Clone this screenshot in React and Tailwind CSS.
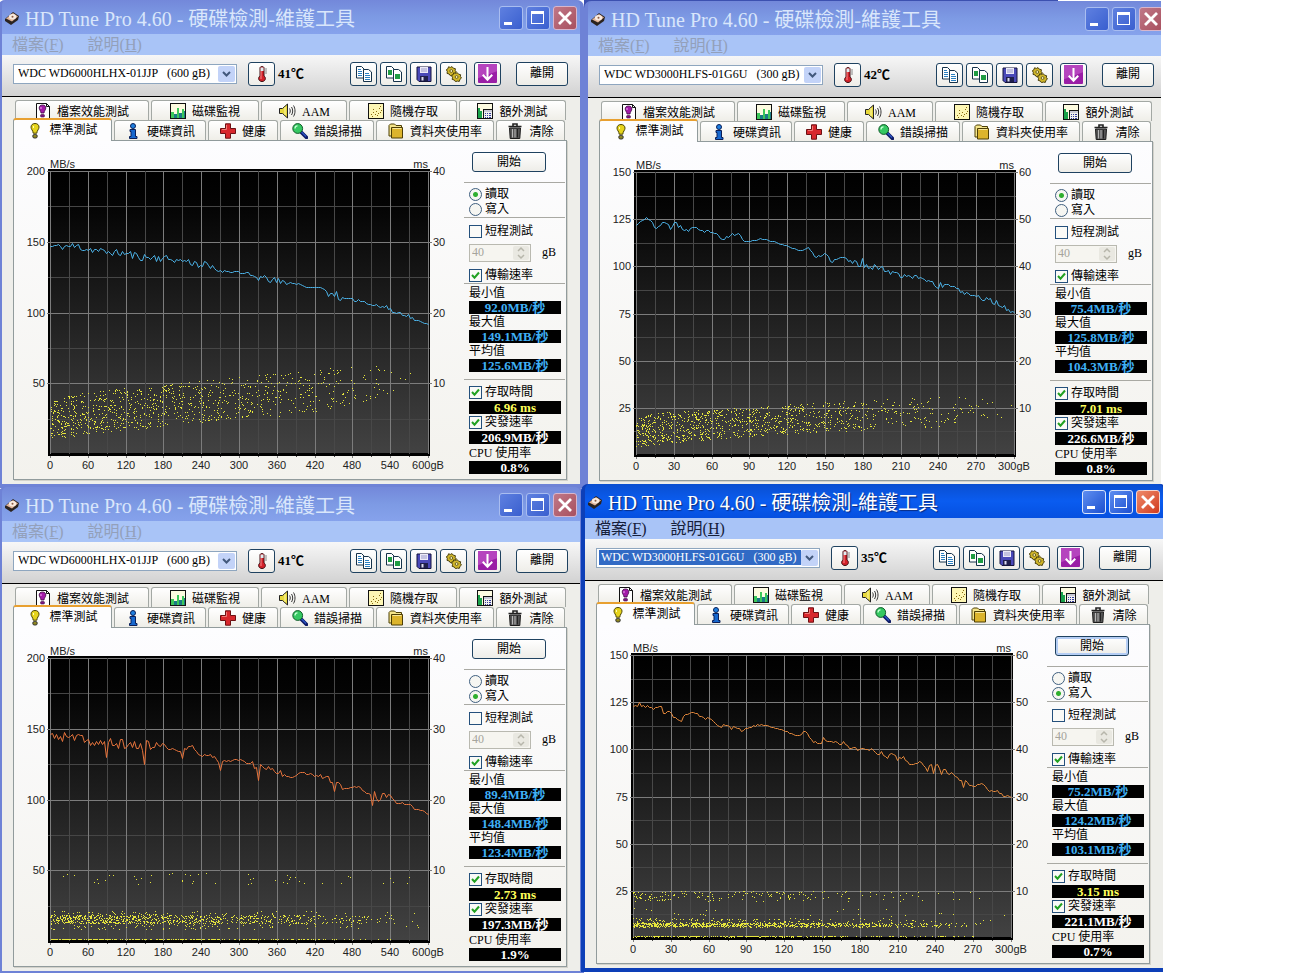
import React from 'react';

/* ---------- toolbar and tab icons, drawn on a 16 x 16 grid ---------- */

const Svg = ({ children, className = 'size-4 shrink-0' }) => (
  <svg viewBox="0 0 16 16" className={className} aria-hidden="true">
    {children}
  </svg>
);

const DiskIcon = () => (
  <Svg>
    <path d="M1 9 9 2l6 4-1 4-7 5-6-4z" fill="#2b2320" />
    <path d="M2 8.500 9 3l5 3.500-6 5z" fill="#e0b49a" />
    <ellipse cx="8.500" cy="6.800" rx="3.600" ry="2.700" fill="#f9ebe0" />
    <circle cx="8.500" cy="6.800" r="1" fill="#8a5a44" />
  </Svg>
);

const FileBenchIcon = () => (
  <Svg>
    <path d="M1.500.5h10l3 3v12h-13z" fill="#fff" stroke="#111" />
    <path d="M11.500.5v3h3" fill="none" stroke="#111" />
    <path d="M7.500 2c2.200 0 3.300 1.300 3.300 3 0 2-1.600 2.700-1.800 5H6c-.2-2.300-1.800-3-1.800-5 0-1.700 1.100-3 3.300-3z" fill="#a31ba8" stroke="#3c0a40" strokeWidth=".8" />
    <rect x="5.500" y="11.500" width="4" height="2.500" rx="1" fill="#7c1580" stroke="#3c0a40" strokeWidth=".6" />
    <path d="M6 4v2" stroke="#f0a8f4" />
  </Svg>
);

const MonitorIcon = () => (
  <Svg>
    <rect x=".5" y=".5" width="15" height="15" fill="#fdfbe0" stroke="#111" />
    <path d="M1 15V9h3v6zM7 15V5h2v10zM12 15V6h2v9z" fill="#3cc85a" />
    <path d="M4 15v-4h3v4zM9 15v-5h3v5zM14 15V8h1v7z" fill="#1c7a86" />
  </Svg>
);

const SpeakerIcon = () => (
  <Svg className="h-4 w-[18px] shrink-0">
    <path d="M.5 5.500h3l5-4.500v14l-5-4.500h-3z" fill="#e7d83c" stroke="#222" />
    <path d="M6 4v8" stroke="#fff9a8" />
    <path d="M10.500 5.500c1 1.500 1 3.500 0 5M12.500 4c1.600 2.400 1.600 5.600 0 8M14.500 2.500c2 3.300 2 7.700 0 11" fill="none" stroke="#222" strokeWidth=".9" />
  </Svg>
);

const RandomIcon = () => (
  <Svg>
    <rect x=".5" y=".5" width="15" height="15" fill="#fdf6b4" stroke="#111" />
    <path d="M3 11h1v1H3zM5 9h1v1H5zM7 11h1v1H7zM8 8h1v1H8zM10 10h1v1h-1zM11 5h1v1h-1zM13 7h1v1h-1zM4 13h1v1H4zM12 9h1v1h-1zM9 12h1v1H9zM5 6h1v1H5zM12 3h1v1h-1z" fill="#8a6a10" />
  </Svg>
);

const ExtraIcon = () => (
  <Svg>
    <rect x=".5" y=".5" width="15" height="15" fill="#fdfbe0" stroke="#111" />
    <path d="M1 15V5h2v3h2v7z" fill="#19a24a" />
    <rect x="6.500" y="6.500" width="9" height="9" fill="#f1f1ee" stroke="#111" />
    <path d="M7 7h8v2H7z" fill="#c9c9d6" />
    <path d="M8 10h1v1H8zM10 10h1v1h-1zM12 10h2v1h-2zM8 12h1v1H8zM10 12h1v1h-1zM12 12h2v1h-2zM8 14h1v1H8zM10 14h1v1h-1zM12 14h2v1h-2z" fill="#333c9c" />
  </Svg>
);

const BulbIcon = () => (
  <Svg>
    <path d="M8 .5c2.500 0 4 1.500 4 3.700 0 2.200-2 3-2.200 6H6.200C6 7.200 4 6.400 4 4.200 4 2 5.500.5 8 .5z" fill="#e6d41c" stroke="#4a4300" />
    <path d="M6.500 3v2" stroke="#fffcb4" />
    <rect x="5.800" y="11.500" width="4.400" height="3.500" rx="1.500" fill="#8f8720" stroke="#333" />
  </Svg>
);

const InfoIcon = () => (
  <Svg>
    <circle cx="8" cy="3" r="2.500" fill="#1f7fe0" stroke="#0b1f58" />
    <path d="M5 6.500h5.500v7H12v2H4.500v-2H6V8.500H5z" fill="#1768cf" stroke="#0b1f58" />
  </Svg>
);

const CrossIcon = () => (
  <Svg>
    <path d="M5.500.8h5v4.700h5v5h-5v4.700h-5v-4.700h-5v-5h5z" fill="#d8272c" stroke="#6d1013" />
    <path d="M6.500 2v4.500H2" fill="none" stroke="#f07a76" />
  </Svg>
);

const ScanIcon = () => (
  <Svg>
    <path d="M9 9l5.500 5.500" stroke="#0e1b66" strokeWidth="3.600" strokeLinecap="round" />
    <path d="M9.500 9l4.500 4.500" stroke="#2b55c8" strokeWidth="1.200" />
    <circle cx="5.700" cy="5.500" r="4.900" fill="#35c862" stroke="#0f5a28" />
    <path d="M3 5.500c0-1.700 1-2.700 2.500-2.700" fill="none" stroke="#c4ffd2" strokeWidth="1.300" />
  </Svg>
);

const FolderIcon = () => (
  <Svg>
    <path d="M1 13V2.500L2.500 1h4L8 2.500h5.500V13z" fill="#f5e58a" stroke="#4d3e05" />
    <path d="M3.500 4.500h11v10.500h-11z" fill="#dcb42c" stroke="#4d3e05" />
    <path d="M4.500 5.500h9" stroke="#f8e79a" />
  </Svg>
);

const TrashIcon = () => (
  <Svg>
    <path d="M1.500 3.500h13M6 3V1h4v2" fill="none" stroke="#222" strokeWidth="1.600" />
    <path d="M2.500 5h11l-.7 10.500H3.200z" fill="#565656" stroke="#1b1b1b" />
    <path d="M5.500 6v8.500M8 6v8.500" stroke="#b9b9b9" />
    <path d="M10.500 6v8.500" stroke="#222" />
  </Svg>
);

const ThermoIcon = () => (
  <Svg className="h-[18px] w-4">
    <path d="M6 2c0-2 4-2 4 0v8c2.500 1.600 1.500 5.500-2 5.500S3.500 11.600 6 10z" fill="#d3222a" stroke="#3d0d10" />
    <path d="M6.500 1.500h3V5h-3z" fill="#dfeff2" />
    <path d="M7 5v8" stroke="#f78d8d" />
    <path d="M11 3h2M11 5h2M11 7h2" stroke="#555" strokeWidth=".7" />
  </Svg>
);

const CopyIcon = ({ picture }) => (
  <Svg>
    <path d="M.5.500h5l2.500 2.500v9H.5z" fill="#fff" stroke="#16324a" />
    <path d="M7.500 3.500h5l3 2.500v9.500h-8z" fill="#fff" stroke="#16324a" />
    {picture ? (
      <path d="M2 4h4v5H2zM9 8h5v5H9z" fill="#1f9c43" />
    ) : (
      <path d="M2 3.500h3M2 5.500h4M2 7.500h4M2 9.500h4M9 7.500h4M9 9.500h5M9 11.500h5M9 13.500h5" stroke="#2a7fc0" />
    )}
  </Svg>
);

const SaveIcon = () => (
  <Svg>
    <path d="M1 1h14v14.500H3L1 13.500z" fill="#4a49b8" stroke="#14143c" />
    <path d="M4 1h8v6H4z" fill="#eceaf8" />
    <path d="M5 3h6M5 5h6" stroke="#9a9ac8" />
    <path d="M4 10h8v5H4z" fill="#20204c" />
    <path d="M5.500 11h2v3.500h-2z" fill="#dcdcf0" />
  </Svg>
);

const GearsIcon = () => (
  <Svg>
    <g fill="#d0b62a" stroke="#3b3204" strokeWidth=".9">
      <path d="M2.500.8l2 .6L6 .6l1.300 1.600 2.100.5-.2 2L10.300 6 8.700 7.400l-.6 2-2-.3-1.800.6-1.200-1.700L1 7.400l.3-2L.3 3.700 2 2.600z" />
      <path d="M7.700 6.800l2 .6 1.500-.8 1.300 1.600 2.100.5-.2 2 1.100 1.300-1.600 1.400-.6 2-2-.3-1.800.6-1.200-1.700-2.100-.6.300-2-1-1.700 1.700-1.100z" />
    </g>
    <circle cx="5.300" cy="5" r="1.400" fill="#fff6b0" stroke="#3b3204" strokeWidth=".7" />
    <circle cx="10.600" cy="11" r="1.400" fill="#fff6b0" stroke="#3b3204" strokeWidth=".7" />
  </Svg>
);

const MinimizeToTrayIcon = () => (
  <Svg className="size-[19px]">
    <rect width="16" height="16" rx=".8" fill="#9a1ea6" />
    <path d="M0 0h16v6L0 12z" fill="#b544be" />
    <path d="M8 2.500v10M4 9l4 4.200L12 9" fill="none" stroke="#fff" strokeWidth="1.700" />
  </Svg>
);

/* ---------- chart ---------- */

const PLOT = { x: 50, y: 171, w: 379, h: 283 };

const makeRandom = (seed) => () => {
  seed = (seed + 0x6d2b79f5) | 0;
  let t = Math.imul(seed ^ (seed >>> 15), 1 | seed);
  t = (t + Math.imul(t ^ (t >>> 7), 61 | t)) ^ t;
  return ((t ^ (t >>> 14)) >>> 0) / 4294967296;
};

const interpolate = (points, x, index) => {
  for (let i = 1; i < points.length; i++) {
    if (x <= points[i][0]) {
      const a = points[i - 1];
      const b = points[i];
      return a[index] + ((b[index] - a[index]) * (x - a[0])) / (b[0] - a[0]);
    }
  }
  return points[points.length - 1][index];
};

/* trend entries are [position in gB, speed in MB/s, ripple] */
function speedLine({ capacity, maxSpeed, trend, spikes = [], seed }) {
  const random = makeRandom(seed);
  const out = [];
  for (let px = 0; px < PLOT.w; px += 2) {
    const gb = (px / (PLOT.w - 1)) * capacity;
    const ripple = interpolate(trend, gb, 2);
    let speed = interpolate(trend, gb, 1) + (random() * 2 - 1) * ripple;
    const spike = spikes.find((s) => Math.abs((s[0] / capacity) * (PLOT.w - 1) - px) <= 1);
    if (spike) speed = spike[1];
    out.push(`${PLOT.x + px + 0.5},${Math.round(PLOT.y + PLOT.h * (1 - speed / maxSpeed)) + 0.5}`);
  }
  return out.join(' ');
}

/* bands entries are { count, shape: [[gB, low ms, high ms], ...] } */
function accessDots({ capacity, maxTime, bands, seed }) {
  const random = makeRandom(seed + 77);
  let d = '';
  bands.forEach(({ count, shape, even }) => {
    for (let i = 0; i < count; i++) {
      const u = random();
      const gb = (even ? u : 1 - Math.sqrt(1 - u)) * capacity * 0.99;
      const low = interpolate(shape, gb, 1);
      const high = interpolate(shape, gb, 2);
      const ms = low + (high - low) * random();
      const x = PLOT.x + Math.round((gb / capacity) * PLOT.w);
      const y = PLOT.y + Math.round(PLOT.h * (1 - ms / maxTime));
      d += `M${x} ${y}h1v1h-1z`;
    }
  });
  return d;
}

function Chart({ test, id }) {
  const { capacity, maxSpeed, maxTime, rows, lineColor } = test;
  const right = PLOT.x + PLOT.w;
  const bottom = PLOT.y + PLOT.h;
  const columns = 10;
  const vertical = Array.from({ length: columns * 2 + 1 }, (_, i) => ({
    x: PLOT.x + Math.round((i * (PLOT.w - 1)) / (columns * 2)),
    major: i % 2 === 0,
    label: (i / 2) * (capacity / columns),
  }));
  const horizontal = Array.from({ length: rows * 2 }, (_, i) => ({
    y: PLOT.y + Math.round((i * PLOT.h) / (rows * 2)),
    major: i % 2 === 0,
    speed: maxSpeed - ((i / 2) * maxSpeed) / rows,
    time: maxTime - ((i / 2) * maxTime) / rows,
  }));
  return (
    <svg
      viewBox="14 141 450 338"
      className="h-[338px] w-[450px] shrink-0 font-['Liberation_Sans',sans-serif] text-[11px]"
      role="img"
      aria-label="MB/s, ms"
    >
      <defs>
        <linearGradient id={id} x1="0" y1="0" x2="0" y2="1">
          <stop offset="0" stopColor="#000" />
          <stop offset=".12" stopColor="#040404" />
          <stop offset="1" stopColor="#424242" />
        </linearGradient>
      </defs>
      <rect x="48" y="169" width="382" height="287" fill="#000" />
      <rect x={PLOT.x} y={PLOT.y} width={PLOT.w} height={PLOT.h - 1} fill={`url(#${id})`} />
      <g shapeRendering="crispEdges">
        {horizontal.map(({ y, major }) => (
          <rect key={y} x={major ? 47 : 48} y={y} width={major ? 385 : 382} height="1" fill={major ? '#7c7c7c' : '#464646'} />
        ))}
        {vertical.map(({ x, major }) => (
          <rect key={x} x={x} y={PLOT.y} width="1" height={PLOT.h + (major ? 4 : 3)} fill={major ? '#7c7c7c' : '#484848'} />
        ))}
        <path d="M48 454h382v2H48z" fill="#000" />
        <path d={accessDots(test)} fill="#e6e63c" />
      </g>
      <polyline points={speedLine(test)} fill="none" stroke={lineColor} strokeWidth="1" />
      <g fill="#222">
        <text x="50" y="168">MB/s</text>
        <text x="428" y="168" textAnchor="end">ms</text>
        {horizontal.filter((h) => h.major).map(({ y, speed, time }) => (
          <React.Fragment key={y}>
            <text x="45" y={y + 4} textAnchor="end">{speed}</text>
            <text x="433" y={y + 4}>{time}</text>
          </React.Fragment>
        ))}
        {vertical.filter((v) => v.major).map(({ x, label }) => (
          <text key={x} x={label === capacity ? right - 1 : x} y={bottom + 15} textAnchor="middle">
            {label === capacity ? `${label}gB` : label}
          </text>
        ))}
      </g>
    </svg>
  );
}

/* ---------- window parts ---------- */

const buttonLook =
  'flex items-center justify-center rounded-[3px] border border-[#1f4260] bg-gradient-to-b from-white to-[#eeede8]';

const ToolButton = ({ label, children }) => (
  <button type="button" aria-label={label} className={`${buttonLook} h-6 w-[27px]`}>
    {children}
  </button>
);

const TitleButtons = ({ active }) => {
  const blue = active
    ? 'border-[#dbe6fb] bg-gradient-to-br from-[#5f8ef0] to-[#1c4ed0]'
    : 'border-[#a9bdf0] bg-gradient-to-br from-[#5f80e0] to-[#3a5fcf]';
  const red = active
    ? 'border-[#f4d6cf] bg-gradient-to-br from-[#ee8a6a] to-[#d0381a]'
    : 'border-[#d8b6cc] bg-gradient-to-br from-[#c07888] to-[#a8505f]';
  return (
    <div className="flex shrink-0 gap-[3px] text-white">
      <button type="button" aria-label="最小化" className={`size-6 rounded-[3px] border ${blue}`}>
        <svg viewBox="0 0 22 22" className="size-full"><path d="M4 15h8v3H4z" fill="currentColor" /></svg>
      </button>
      <button type="button" aria-label="最大化" className={`size-6 rounded-[3px] border ${blue}`}>
        <svg viewBox="0 0 22 22" className="size-full">
          <path d="M4 4h13v13H4zM5 7v9h11V7z" fill="currentColor" fillRule="evenodd" />
        </svg>
      </button>
      <button type="button" aria-label="關閉" className={`size-6 rounded-[3px] border ${red}`}>
        <svg viewBox="0 0 22 22" className="size-full">
          <path d="M5 5l12 12M17 5 5 17" stroke="currentColor" strokeWidth="2.800" />
        </svg>
      </button>
    </div>
  );
};

const Tab = ({ className, icon, children, active }) => (
  <button
    type="button"
    role="tab"
    aria-selected={Boolean(active)}
    className={`flex items-center justify-center gap-1.5 whitespace-nowrap rounded-t-[3px] border border-b-0 ${
      active
        ? 'relative z-10 -mb-px h-[23px] border-[#919b9c] border-t-2 border-t-[#e8a030] bg-[#fdfdfe]'
        : 'h-5 border-[#a3a8a4] bg-gradient-to-b from-white to-[#efeee8]'
    } ${className}`}
  >
    {icon}
    <span className={active ? '' : 'pt-[3px]'}>{children}</span>
  </button>
);

const Radio = ({ name, checked, children }) => (
  <label className="flex h-[15px] items-center gap-[3px] pl-[5px]">
    <input
      type="radio"
      name={name}
      defaultChecked={checked}
      className="size-[13px] appearance-none rounded-full border border-[#3f5f7f] bg-[#f6f6f2] checked:bg-[radial-gradient(circle,#2fae2f_0_2px,#f6f6f2_3px)]"
    />
    {children}
  </label>
);

const Check = ({ checked, className, children }) => (
  <label className={`flex items-center gap-[3px] pl-[5px] ${className}`}>
    <span className="relative flex size-[13px]">
      <input
        type="checkbox"
        defaultChecked={checked}
        className="peer size-[13px] appearance-none border border-[#24507c] bg-[#fafaf7]"
      />
      <svg viewBox="0 0 13 13" className="pointer-events-none absolute inset-0 hidden size-[13px] peer-checked:block">
        <path d="M3 6l2.500 2.700L10 3.500" fill="none" stroke="#21a121" strokeWidth="2" />
      </svg>
    </span>
    {children}
  </label>
);

const Value = ({ color, children }) => (
  <output
    className={`ml-[5px] flex h-[13px] w-[92px] items-center justify-center overflow-hidden bg-black text-[13px] font-bold leading-[13px] ${color}`}
  >
    {children}
  </output>
);

const Rule = ({ className = '' }) => <hr className={`h-px border-0 bg-[#a9a9a3] ${className}`} />;

const Sidebar = ({ test, id, active }) => (
  <div className="flex w-[101px] flex-col pt-[11px]">
    <button
      type="button"
      className={`${buttonLook} ml-2 h-5 w-[74px] ${active ? 'shadow-[inset_0_0_0_2px_#b4cdf4]' : ''}`}
    >
      開始
    </button>
    <Rule className="mt-2.5 mb-1" />
    <Radio name={`mode-${id}`} checked={test.mode === 'read'}>讀取</Radio>
    <Radio name={`mode-${id}`} checked={test.mode === 'write'}>寫入</Radio>
    <Rule />
    <Check className="mt-1.5 h-[15px]">短程測試</Check>
    <div className="mt-1 flex h-[19px] items-center pl-[5px]">
      <span className="flex h-[18px] w-[62px] items-center border border-[#b9b9b0] bg-[#f6f5f0]">
        <input
          type="number"
          aria-label="短程測試 gB"
          defaultValue="40"
          disabled
          className="w-full min-w-0 appearance-none bg-transparent pl-0.5 text-[#a5a49c] [&::-webkit-inner-spin-button]:appearance-none"
        />
        <svg viewBox="0 0 17 14" className="h-3.5 w-[17px] shrink-0">
          <rect width="16" height="14" rx="2" fill="#e9e8e1" />
          <path d="M5 5l3-3 3 3M5 9l3 3 3-3" fill="none" stroke="#b7b6ab" strokeWidth="1.500" />
        </svg>
      </span>
      <span className="ml-[11px]">gB</span>
    </div>
    <Check checked className="mt-1.5 h-[15px]">傳輸速率</Check>
    <Rule className="mb-px" />
    {[['最小值', test.min], ['最大值', test.max], ['平均值', test.avg]].map(([label, value]) => (
      <div key={label}>
        <div className="h-4 pl-[5px] leading-4">{label}</div>
        <Value color="text-[#3fb0f5]">{value}MB/秒</Value>
      </div>
    ))}
    <Rule className="mt-[7px] mb-1" />
    <Check checked className="h-[17px]">存取時間</Check>
    <Value color="text-[#ffff5a]">{test.access} ms</Value>
    <Check checked className="h-[17px]">突發速率</Check>
    <Value color="text-white">{test.burst}MB/秒</Value>
    <div className="h-[17px] pl-[5px] leading-[18px]">CPU 使用率</div>
    <Value color="text-white">{test.cpu}%</Value>
  </div>
);

function HdTuneWindow({ id, test, active, className }) {
  const titleBar = active
    ? 'bg-gradient-to-b from-[#0a4fd0] via-[#0a5cf0] to-[#0650e0] text-white [text-shadow:1px_1px_1px_#0a2c80]'
    : 'bg-gradient-to-b from-[#7388da] via-[#7d9ae4] to-[#86a2ec] text-[#d9e6fb]';
  return (
    <section className={`absolute overflow-hidden ${className}`}>
      <div className={`w-[586px] rounded-t-[7px] border-4 border-t-0 ${active ? 'border-[#0d3fb8] bg-[#0d3fb8]' : 'border-[#6e82d6] bg-[#6e82d6]'}`}>
        <header className={`flex h-[34px] items-center gap-1 rounded-t-[5px] pl-0.5 pr-[3px] pt-0.5 ${titleBar}`}>
          <DiskIcon />
          <h1 className="flex-1 whitespace-nowrap pl-px pt-0.5 text-[20px] leading-6">HD Tune Pro 4.60 - 硬碟檢測-維護工具</h1>
          <TitleButtons active={active} />
        </header>

        <nav className={`flex h-[21px] items-center gap-6 bg-[#a9c4f7] pl-2.5 text-[16px] leading-5 ${active ? 'text-[#16203a]' : 'text-[#93a0ba]'}`}>
          <button type="button">檔案(<u>F</u>)</button>
          <button type="button">說明(<u>H</u>)</button>
        </nav>

        <div className="flex h-[42px] items-center border-b border-black bg-gradient-to-b from-[#f7f7f7] to-[#d2d2d2] pb-1 pl-[11px] pr-3">
          <div className="relative flex h-5 w-56 items-center border border-[#8ea6bf] bg-white p-0.5">
            <select
              aria-label="硬碟"
              className={`h-[15px] w-[202px] appearance-none pl-0.5 leading-[15px] outline-none ${
                active ? 'outline-1 -outline-offset-1 outline-dotted outline-[#e0a850] bg-[#316ac5] text-white' : 'bg-white text-black'
              }`}
            >
              <option>{test.drive}</option>
            </select>
            <svg viewBox="0 0 17 16" className="pointer-events-none absolute right-px top-px h-4 w-[17px]">
              <rect width="17" height="16" rx="2" fill="#c3d3f8" />
              <path d="M5 6l3.500 3.500L12 6" fill="none" stroke="#42587c" strokeWidth="2" />
            </svg>
          </div>
          <div className="ml-[11px] flex items-center gap-[3px]">
            <ToolButton label="溫度"><ThermoIcon /></ToolButton>
            <span className="text-[13px] font-bold">{test.temperature}℃</span>
          </div>
          <div className="ml-auto flex gap-[3px]">
            <ToolButton label="複製文字"><CopyIcon /></ToolButton>
            <ToolButton label="複製圖片"><CopyIcon picture /></ToolButton>
            <ToolButton label="儲存"><SaveIcon /></ToolButton>
            <ToolButton label="選項"><GearsIcon /></ToolButton>
          </div>
          <div className="ml-[7px] flex gap-[15px]">
            <ToolButton label="縮小"><MinimizeToTrayIcon /></ToolButton>
            <button type="button" className={`${buttonLook} h-6 w-[52px]`}>離開</button>
          </div>
        </div>

        <main className="bg-[#eeeeea] pb-1 pl-[11px] pr-[13px] pt-[3px]">
          <div role="tablist">
            <div className="flex gap-0.5 pl-0.5">
              <Tab className="w-[134px]" icon={<FileBenchIcon />}>檔案效能測試</Tab>
              <Tab className="w-[108px]" icon={<MonitorIcon />}>磁碟監視</Tab>
              <Tab className="w-[86px]" icon={<SpeakerIcon />}>AAM</Tab>
              <Tab className="w-[108px]" icon={<RandomIcon />}>隨機存取</Tab>
              <Tab className="w-[107px]" icon={<ExtraIcon />}>額外測試</Tab>
            </div>
            <div className="flex h-5 items-end gap-0.5">
              <Tab active className="w-[99px]" icon={<BulbIcon />}>標準測試</Tab>
              <Tab className="w-[92px]" icon={<InfoIcon />}>硬碟資訊</Tab>
              <Tab className="w-[70px]" icon={<CrossIcon />}>健康</Tab>
              <Tab className="w-[94px]" icon={<ScanIcon />}>錯誤掃描</Tab>
              <Tab className="w-[118px]" icon={<FolderIcon />}>資料夾使用率</Tab>
              <Tab className="w-[69px]" icon={<TrashIcon />}>清除</Tab>
            </div>
          </div>
          <div className="flex border border-[#919b9c] bg-gradient-to-b from-[#fdfdff] to-[#f3f2ed] shadow-[1px_1px_0_#d3d2cb]">
            <Chart test={test} id={`plot-${id}`} />
            <Sidebar test={test} id={id} active={active} />
          </div>
        </main>
      </div>
    </section>
  );
}

/* ---------- measurements ---------- */

const raptor600 = {
  drive: 'WDC WD6000HLHX-01JJP\u00a0\u00a0\u00a0(600 gB)',
  temperature: 41,
  capacity: 600,
  maxSpeed: 200,
  maxTime: 40,
  rows: 4,
};

const raptor300 = {
  drive: 'WDC WD3000HLFS-01G6U\u00a0\u00a0\u00a0(300 gB)',
  capacity: 300,
  maxSpeed: 150,
  maxTime: 60,
  rows: 6,
};

const read600 = {
  ...raptor600,
  mode: 'read', min: '92.0', max: '149.1', avg: '125.6', access: '6.96', burst: '206.9', cpu: '0.8',
  lineColor: '#4cb4ea',
  seed: 11,
  trend: [[0, 147, 2], [45, 147, 3], [60, 145, 3], [90, 143, 2], [120, 142, 3], [150, 139, 3], [180, 139, 3], [195, 137, 1], [215, 137, 2], [240, 134, 4], [255, 132, 3], [266, 130, 1], [300, 129, 0.4], [315, 126, 3], [345, 124, 2], [360, 122, 3], [380, 121, 1], [400, 120, 1], [406, 118, 0.1], [430, 118, 0.1], [440, 114, 2], [455, 113, 3], [460, 110, 1], [490, 109, 1], [510, 106, 1], [540, 103, 1.5], [545, 100, 1], [560, 100, 1.5], [575, 96, 1], [585, 94, 0.5], [600, 92, 0]],
  bands: [{ count: 950, shape: [[0, 2, 7.7], [60, 2.8, 8.9], [180, 4, 9.8], [300, 5, 11], [420, 5.8, 12], [540, 8, 12.8], [600, 9, 13]] }],
};

const read300 = {
  ...raptor300,
  temperature: 42,
  mode: 'read', min: '75.4', max: '125.8', avg: '104.3', access: '7.01', burst: '226.6', cpu: '0.8',
  lineColor: '#4cb4ea',
  seed: 23,
  trend: [[0, 122, 0], [3, 124, 0.5], [8, 126, 0], [12, 124, 0.5], [15, 120, 0], [20, 123, 0.5], [25, 123, 0.5], [27, 120, 0.5], [30, 123, 1], [40, 119, 1], [45, 121, 0.5], [53, 118, 1], [60, 119, 1.5], [68, 114, 0.5], [75, 117, 0.7], [82, 117, 0.7], [86, 113, 0.3], [100, 115, 0.3], [110, 113, 0.2], [130, 108.5, 0.3], [137, 110, 0.3], [142, 105, 0.3], [150, 106, 1.5], [155, 103, 1], [165, 105, 1], [172, 102, 1], [180, 102, 3], [190, 100, 1.5], [200, 98, 2], [210, 96, 2], [225, 94, 1], [232, 93, 2], [240, 90, 2.5], [250, 90, 0.5], [260, 86, 1], [270, 84, 1], [277, 83, 1], [285, 81, 2], [293, 79, 1.5], [296, 76, 0.5], [300, 76, 0]],
  bands: [{ count: 1000, shape: [[0, 1.8, 8], [30, 2.6, 9.8], [60, 3.4, 9.6], [150, 5, 11.3], [240, 5.7, 12.6], [270, 8, 12], [300, 8, 12]] }],
};

const write600 = {
  ...raptor600,
  mode: 'write', min: '89.4', max: '148.4', avg: '123.4', access: '2.73', burst: '197.3', cpu: '1.9',
  lineColor: '#e8743c',
  seed: 37,
  trend: [[0, 146, 1], [20, 144, 4], [45, 144, 3], [60, 141, 3], [120, 139, 4], [180, 138, 3], [195, 135, 1], [225, 137, 2], [240, 131, 1], [255, 133, 2], [265, 127, 1], [275, 128, 1], [305, 128, 0.5], [330, 124, 4], [360, 120, 3], [375, 118, 1.5], [385, 116, 1], [395, 120, 1], [430, 117, 1.5], [450, 112, 3], [465, 108, 1.5], [490, 109, 1], [505, 104, 1], [520, 103, 4], [540, 103, 0.5], [545, 99, 1.5], [570, 96, 1.5], [585, 93, 1], [600, 90, 0]],
  spikes: [[90, 130], [150, 125], [208, 129], [269, 121], [331, 114], [450, 106], [512, 96]],
  bands: [
    { count: 620, shape: [[0, 2.5, 3.7], [600, 2.5, 3.7]] },
    { count: 300, shape: [[0, 1.6, 4.3], [600, 1.8, 4.3]] },
    { count: 260, shape: [[0, 0.3, 0.35], [600, 0.3, 0.35]] },
    { count: 50, even: true, shape: [[0, 8, 9.6], [600, 8, 9.6]] },
  ],
};

const write300 = {
  ...raptor300,
  temperature: 35,
  mode: 'write', min: '75.2', max: '124.2', avg: '103.1', access: '3.15', burst: '221.1', cpu: '0.7',
  lineColor: '#e88a3c',
  seed: 53,
  trend: [[0, 123, 0], [5, 124, 1], [12, 123, 1], [15, 121, 1], [22, 123, 0.5], [24, 119, 0.5], [29, 121, 0.5], [32, 117, 0.5], [37, 114.5, 1], [41, 119, 0.5], [48, 120, 0.5], [55, 117, 0.5], [63, 116, 0.5], [68, 112, 0.5], [72, 113, 0.5], [80, 111, 1.5], [87, 110, 1], [95, 113, 0.5], [105, 113, 0.3], [120, 110, 0.3], [131, 107, 0.3], [136, 110, 0.3], [143, 104, 0.5], [150, 105, 2], [157, 105, 1], [165, 104, 1.5], [172, 101, 1], [180, 101, 2.5], [190, 100, 1], [200, 97, 2], [207, 98, 0.5], [210, 94, 2], [215, 96, 1], [220, 92, 0.5], [228, 94, 1], [232, 91, 2], [240, 89, 3.5], [250, 88, 1], [258, 85, 0.5], [262, 82, 2.5], [270, 81, 0.7], [275, 81, 0.5], [277, 83, 0.5], [281, 79, 0.5], [290, 77, 1.5], [300, 75, 0]],
  bands: [
    { count: 700, shape: [[0, 2.4, 3.3], [300, 2.4, 3.3]] },
    { count: 260, shape: [[0, 2.3, 4.2], [300, 2.3, 4.2]] },
    { count: 280, shape: [[0, 0.3, 0.5], [300, 0.3, 0.5]] },
    { count: 170, shape: [[0, 7.9, 10], [300, 7.9, 10]] },
    { count: 22, even: true, shape: [[0, 4.7, 6.5], [300, 4.7, 6.5]] },
  ],
};

export default function App() {
  return (
    <div className="relative h-screen overflow-hidden bg-white font-['Liberation_Serif','Noto_Sans_CJK_TC',serif] text-[12px] leading-[15px] text-black">
      <div className="absolute left-[584px] top-0 h-2 w-[474px] bg-[#3c50b0]" />
      <HdTuneWindow id="a" test={read600} className="-left-0.5 top-0 w-[586px]" />
      <HdTuneWindow id="b" test={read300} className="left-[584px] top-px w-[577px]" />
      <HdTuneWindow id="c" test={write600} className="-left-0.5 top-[487px] w-[586px]" />
      <HdTuneWindow id="d" test={write300} active className="left-[581px] top-[484px] w-[582px]" />
    </div>
  );
}
